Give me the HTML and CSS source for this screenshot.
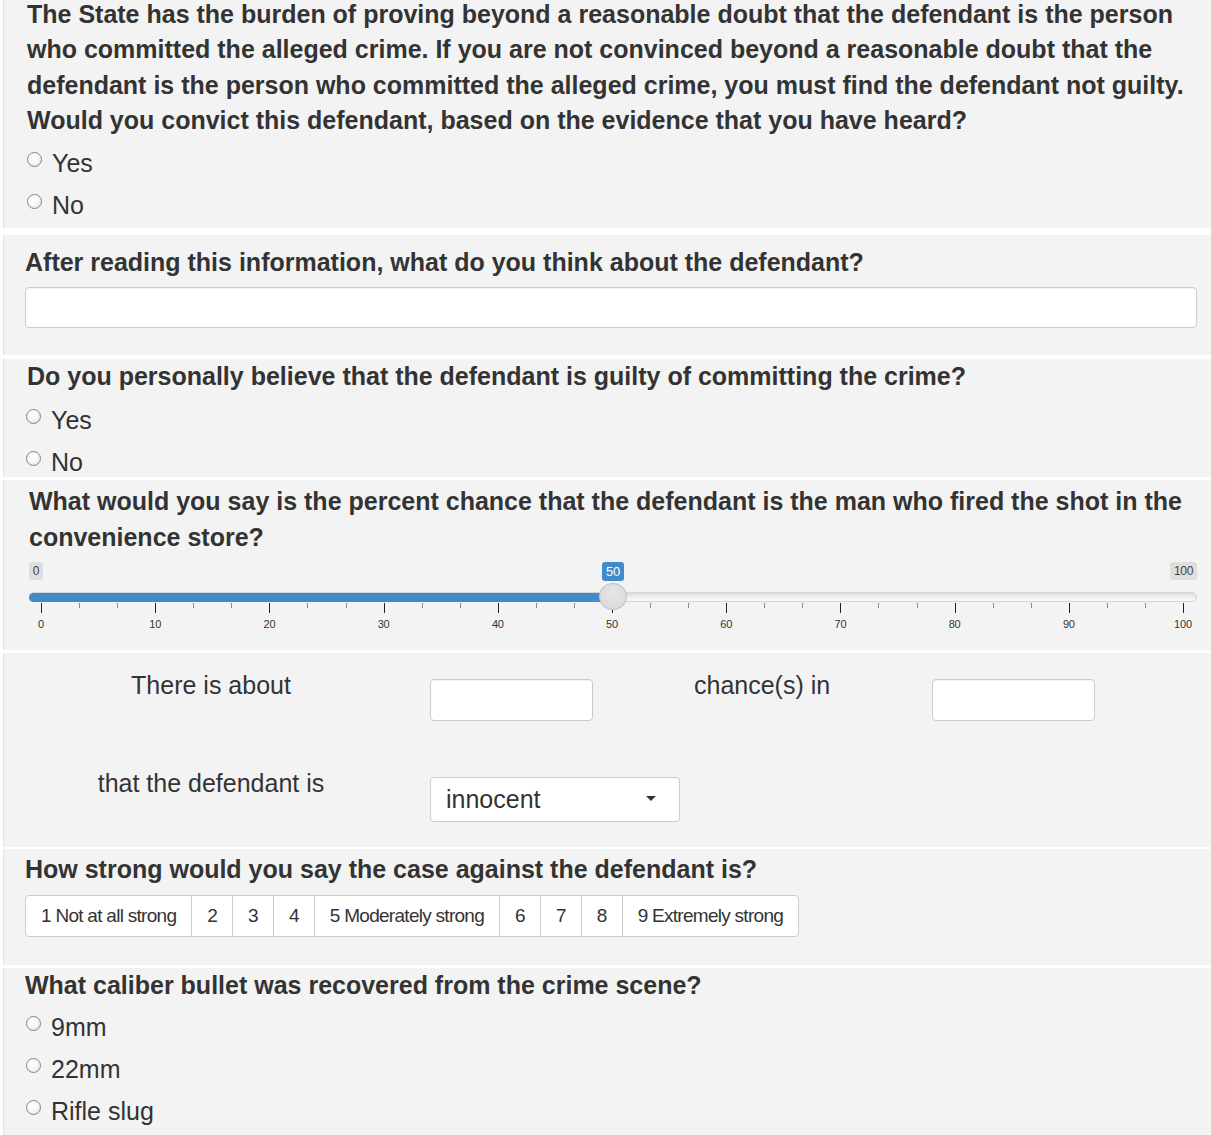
FILE: index.html
```html
<!DOCTYPE html>
<html lang="en">
<head>
<meta charset="utf-8">
<title>Juror questionnaire</title>
<link rel="stylesheet" href="styles.css">
</head>
<body>
<main class="page">

  <section class="panel p1">
    <h2 class="q">The State has the burden of proving beyond a reasonable doubt that the defendant is the person<br>who committed the alleged crime. If you are not convinced beyond a reasonable doubt that the<br>defendant is the person who committed the alleged crime, you must find the defendant not guilty.<br>Would you convict this defendant, based on the evidence that you have heard?</h2>
    <div class="opts">
      <label class="opt"><input type="radio" name="convict"><span>Yes</span></label>
      <label class="opt"><input type="radio" name="convict"><span>No</span></label>
    </div>
  </section>

  <section class="panel p2">
    <h2 class="q">After reading this information, what do you think about the defendant?</h2>
    <input class="text-input wide" type="text">
  </section>

  <section class="panel p3">
    <h2 class="q">Do you personally believe that the defendant is guilty of committing the crime?</h2>
    <div class="opts">
      <label class="opt"><input type="radio" name="guilty"><span>Yes</span></label>
      <label class="opt"><input type="radio" name="guilty"><span>No</span></label>
    </div>
  </section>

  <section class="panel p4">
    <h2 class="q">What would you say is the percent chance that the defendant is the man who fired the shot in the<br>convenience store?</h2>
    <div class="slider">
      <span class="lbl lbl-min">0</span>
      <span class="lbl lbl-val">50</span>
      <span class="lbl lbl-max">100</span>
      <div class="track"></div>
      <div class="bar"></div>
      <div class="grid">
        <span class="tick major" style="left:0%"></span><span class="glabel" style="left:0%">0</span>
        <span class="tick minor" style="left:3.333%"></span><span class="tick minor" style="left:6.667%"></span>
        <span class="tick major" style="left:10%"></span><span class="glabel" style="left:10%">10</span>
        <span class="tick minor" style="left:13.333%"></span><span class="tick minor" style="left:16.667%"></span>
        <span class="tick major" style="left:20%"></span><span class="glabel" style="left:20%">20</span>
        <span class="tick minor" style="left:23.333%"></span><span class="tick minor" style="left:26.667%"></span>
        <span class="tick major" style="left:30%"></span><span class="glabel" style="left:30%">30</span>
        <span class="tick minor" style="left:33.333%"></span><span class="tick minor" style="left:36.667%"></span>
        <span class="tick major" style="left:40%"></span><span class="glabel" style="left:40%">40</span>
        <span class="tick minor" style="left:43.333%"></span><span class="tick minor" style="left:46.667%"></span>
        <span class="tick major" style="left:50%"></span><span class="glabel" style="left:50%">50</span>
        <span class="tick minor" style="left:53.333%"></span><span class="tick minor" style="left:56.667%"></span>
        <span class="tick major" style="left:60%"></span><span class="glabel" style="left:60%">60</span>
        <span class="tick minor" style="left:63.333%"></span><span class="tick minor" style="left:66.667%"></span>
        <span class="tick major" style="left:70%"></span><span class="glabel" style="left:70%">70</span>
        <span class="tick minor" style="left:73.333%"></span><span class="tick minor" style="left:76.667%"></span>
        <span class="tick major" style="left:80%"></span><span class="glabel" style="left:80%">80</span>
        <span class="tick minor" style="left:83.333%"></span><span class="tick minor" style="left:86.667%"></span>
        <span class="tick major" style="left:90%"></span><span class="glabel" style="left:90%">90</span>
        <span class="tick minor" style="left:93.333%"></span><span class="tick minor" style="left:96.667%"></span>
        <span class="tick major" style="left:100%"></span><span class="glabel" style="left:100%">100</span>
      </div>
      <div class="handle"></div>
    </div>
  </section>

  <section class="panel p5">
    <div class="chance-grid">
      <div class="c-text c1">There is about</div>
      <div class="c-field"><input class="text-input small" type="text"></div>
      <div class="c-text c3">chance(s) in</div>
      <div class="c-field"><input class="text-input small" type="text"></div>
      <div class="c-text c1">that the defendant is</div>
      <div class="c-field">
        <div class="select"><span>innocent</span><svg class="caret" width="10" height="5" viewBox="0 0 10 5"><path d="M0 0H10L5 5Z" fill="#333"/></svg></div>
      </div>
    </div>
  </section>

  <section class="panel p6">
    <h2 class="q">How strong would you say the case against the defendant is?</h2>
    <div class="btn-group">
      <button class="btn">1 Not at all strong</button>
      <button class="btn">2</button>
      <button class="btn">3</button>
      <button class="btn">4</button>
      <button class="btn">5 Moderately strong</button>
      <button class="btn">6</button>
      <button class="btn">7</button>
      <button class="btn">8</button>
      <button class="btn">9 Extremely strong</button>
    </div>
  </section>

  <section class="panel p7">
    <h2 class="q">What caliber bullet was recovered from the crime scene?</h2>
    <div class="opts">
      <label class="opt"><input type="radio" name="caliber"><span>9mm</span></label>
      <label class="opt"><input type="radio" name="caliber"><span>22mm</span></label>
      <label class="opt"><input type="radio" name="caliber"><span>Rifle slug</span></label>
    </div>
  </section>

</main>
</body>
</html>
```

FILE: styles.css
```css
html, body {
  margin: 0;
  padding: 0;
  background: #ffffff;
}

body {
  font-family: "Liberation Sans", Arial, sans-serif;
  color: #333333;
  overflow: hidden;
}

.page {
  display: flex;
  flex-direction: column;
}

.panel {
  background: #f3f3f3;
  margin-left: 3px;
  border-left: 1px solid #e1e1e1;
  box-sizing: border-box;
  overflow: hidden;
}

.q {
  margin: 0;
  font-size: 25px;
  font-weight: bold;
  line-height: 35px;
  white-space: nowrap;
  color: #333333;
}

/* radio options */
.opts {
  display: flex;
  flex-direction: column;
}

.opt {
  display: flex;
  align-items: flex-start;
  height: 42px;
  font-size: 25px;
  line-height: 42px;
  color: #333333;
}

.opt input {
  appearance: none;
  -webkit-appearance: none;
  width: 15px;
  height: 15px;
  margin: 10px 10px 0 0;
  border: 1px solid #858585;
  border-radius: 50%;
  background: radial-gradient(circle at 40% 35%, #ffffff 0%, #f6f6f6 50%, #d8d8d8 100%);
  box-sizing: border-box;
  flex: none;
}

/* section 1 */
.p1 {
  margin-top: -3px;
  padding: 0 0 3px 23px;
  height: 231px;
}
.p1 .q { line-height: 35.3px; }
.p1 .opts { margin-top: 4px; }

/* section 2 */
.p2 {
  margin-top: 7px;
  height: 120px;
  padding: 10px 10px 0 21px;
}

.text-input {
  display: block;
  box-sizing: border-box;
  background: #ffffff;
  border: 1px solid #cccccc;
  border-radius: 4px;
  box-shadow: inset 0 1px 1px rgba(0, 0, 0, 0.05);
  font: inherit;
  outline: none;
}

.text-input.wide {
  width: 1172px;
  height: 41px;
  margin-top: 7px;
}

/* section 3 */
.p3 {
  margin-top: 4px;
  height: 118px;
  padding: 0 0 0 23px;
}
.p3 .opts { margin-top: 5px; margin-left: -1px; }

/* section 4 - slider */
.p4 {
  margin-top: 3px;
  height: 170px;
  padding: 3px 0 0 25px;
}
.p4 .q { line-height: 36px; }

.slider {
  position: relative;
  width: 1168px;
  height: 92px;
  margin-top: 3px;
}

.lbl {
  position: absolute;
  top: 4px;
  height: 18px;
  line-height: 18px;
  font-size: 12px;
  letter-spacing: -0.3px;
  border-radius: 3px;
  background: #dedede;
  color: #444444;
  box-sizing: border-box;
  text-align: center;
}
.lbl-min { left: 0; width: 14px; }
.lbl-val {
  left: 573px;
  width: 22px;
  height: 19px;
  line-height: 19px;
  background: #428bca;
  color: #ffffff;
  font-size: 13px;
}
.lbl-max { left: 1141px; width: 27px; }

.track {
  position: absolute;
  left: 0;
  right: 0;
  top: 34px;
  height: 10px;
  border-radius: 5px;
  background: linear-gradient(#dcdcdc, #f2f2f2 60%, #fafafa);
  border: 1px solid #d6d6d6;
  box-sizing: border-box;
}

.bar {
  position: absolute;
  left: 0;
  width: 586px;
  top: 35px;
  height: 9px;
  border-radius: 5px 0 0 5px;
  background: #428bca;
}

.handle {
  position: absolute;
  left: 570px;
  top: 25px;
  width: 28px;
  height: 27px;
  border-radius: 50%;
  background: radial-gradient(circle at 50% 40%, #e6e6e6 0%, #dcdcdc 70%, #d2d2d2 100%);
  border: 1px solid #c2c2c2;
  box-sizing: border-box;
}

.grid {
  position: absolute;
  left: 12px;
  right: 14px;
  top: 45px;
  height: 40px;
}

.tick {
  position: absolute;
  top: 0;
  width: 1px;
  background: #222222;
}
.tick.major { height: 10px; }
.tick.minor { height: 5px; background: #8a8a8a; }

.glabel {
  position: absolute;
  top: 14px;
  transform: translateX(-50%);
  font-size: 11px;
  line-height: 14px;
  letter-spacing: -0.2px;
  color: #333333;
}

/* section 5 */
.p5 {
  margin-top: 3px;
  height: 194px;
  padding: 17px 0 26px 1px;
}

.chance-grid {
  display: grid;
  grid-template-columns: 425px 251px 251px 1fr;
  grid-template-rows: 98px auto;
  font-size: 25px;
  line-height: 30px;
}

.c-text { color: #333333; }
.c1 { text-align: center; width: 412px; }
.c3 { padding-left: 13px; }
.c-field { padding-top: 9px; }

.text-input.small {
  width: 163px;
  height: 42px;
}

.select {
  display: flex;
  align-items: center;
  justify-content: space-between;
  box-sizing: border-box;
  width: 250px;
  height: 45px;
  padding: 0 23px 2px 15px;
  background: #ffffff;
  border: 1px solid #cccccc;
  border-radius: 4px;
  font-size: 25px;
  color: #333333;
}

/* section 6 */
.p6 {
  margin-top: 2px;
  height: 116px;
  padding: 3px 0 0 21px;
}

.btn-group {
  display: flex;
  margin-top: 8px;
}

.btn {
  height: 42px;
  padding: 0 15px;
  margin: 0 0 0 -1px;
  background: #ffffff;
  border: 1px solid #cccccc;
  border-radius: 0;
  font-family: "Liberation Sans", Arial, sans-serif;
  font-size: 19px;
  letter-spacing: -0.72px;
  color: #333333;
  cursor: pointer;
}
.btn:first-child { margin-left: 0; border-radius: 4px 0 0 4px; }
.btn:last-child { border-radius: 0 4px 4px 0; }

/* section 7 */
.p7 {
  margin-top: 3px;
  height: 170px;
  padding: 0 0 0 21px;
}
.p7 .opts { margin-top: 3px; margin-left: 1px; }
```
